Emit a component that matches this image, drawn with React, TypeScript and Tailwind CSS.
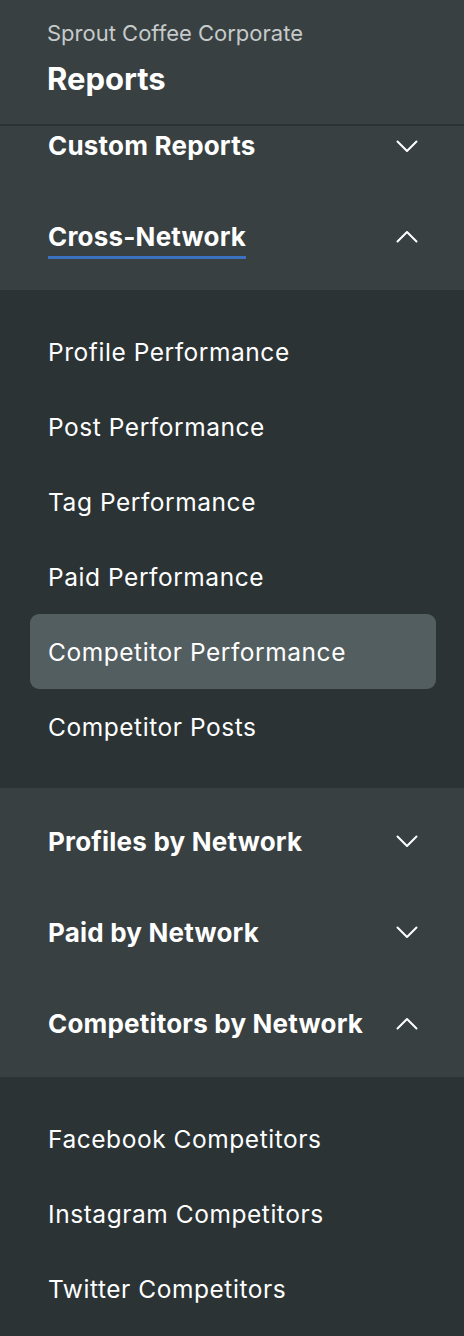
import React from "react";

const HEADER_BG = "bg-[#384042]";
const DARK_BG = "bg-[#2b3335]";

function Chevron({ up }: { up?: boolean }) {
  return (
    <svg width="22" height="13" viewBox="0 0 22 13" fill="none" className="shrink-0">
      {up ? (
        <path d="M1.5 11.5 L11 2 L20.5 11.5" stroke="#ffffff" strokeWidth="2" strokeLinecap="round" strokeLinejoin="round" />
      ) : (
        <path d="M1.5 1.5 L11 11 L20.5 1.5" stroke="#ffffff" strokeWidth="2" strokeLinecap="round" strokeLinejoin="round" />
      )}
    </svg>
  );
}

function SectionRow({ label, up }: { label: string; up?: boolean }) {
  return (
    <div className="flex h-[91px] items-center justify-between pl-[48px] pr-[46px]">
      <span className="text-[26px] font-bold leading-[32px] tracking-[0.2px] text-white">{label}</span>
      <Chevron up={up} />
    </div>
  );
}

function Item({ label, selected }: { label: string; selected?: boolean }) {
  return (
    <div
      className={`ml-[30px] mr-[28px] flex h-[75px] items-center rounded-[9px] pl-[18px] text-[24.5px] leading-[32px] tracking-[0.55px] text-white ${
        selected ? "bg-[#535e60]" : ""
      }`}
    >
      {label}
    </div>
  );
}

export default function App() {
  return (
    <div className={`min-h-screen w-full ${DARK_BG}`} style={{ fontFamily: "Inter, 'Noto Sans', sans-serif" }}>
      <div className={`${HEADER_BG} h-[126px] border-b-2 border-[#2b3234] pl-[47px]`}>
        <div className="pt-[19px] text-[22px] leading-[28px] text-[#c6cacb]">Sprout Coffee Corporate</div>
        <div className="mt-[14px] text-[31px] font-bold leading-[36px] text-white">Reports</div>
      </div>
      <div className={`${HEADER_BG} pb-[8px]`}>
        <div className="flex h-[65px] items-start justify-between pl-[48px] pr-[46px]">
          <span className="text-[26px] font-bold leading-[40px] tracking-[0.2px] text-white">Custom Reports</span>
          <div className="pt-[14px]">
            <Chevron />
          </div>
        </div>
        <div className="flex h-[91px] items-center justify-between pl-[48px] pr-[46px]">
          <span className="relative text-[26px] font-bold leading-[32px] tracking-[0.2px] text-white">
            Cross-Network
            <span className="absolute left-0 right-0 top-[35px] h-[3px] bg-[#3b72c0]" />
          </span>
          <Chevron up />
        </div>
      </div>
      <div className={`${DARK_BG} py-[24px]`}>
        <Item label="Profile Performance" />
        <Item label="Post Performance" />
        <Item label="Tag Performance" />
        <Item label="Paid Performance" />
        <Item label="Competitor Performance" selected />
        <Item label="Competitor Posts" />
      </div>
      <div className={`${HEADER_BG} py-[8px]`}>
        <SectionRow label="Profiles by Network" />
        <SectionRow label="Paid by Network" />
        <SectionRow label="Competitors by Network" up />
      </div>
      <div className={`${DARK_BG} pt-[24px] pb-[10px]`}>
        <Item label="Facebook Competitors" />
        <Item label="Instagram Competitors" />
        <Item label="Twitter Competitors" />
      </div>
    </div>
  );
}
